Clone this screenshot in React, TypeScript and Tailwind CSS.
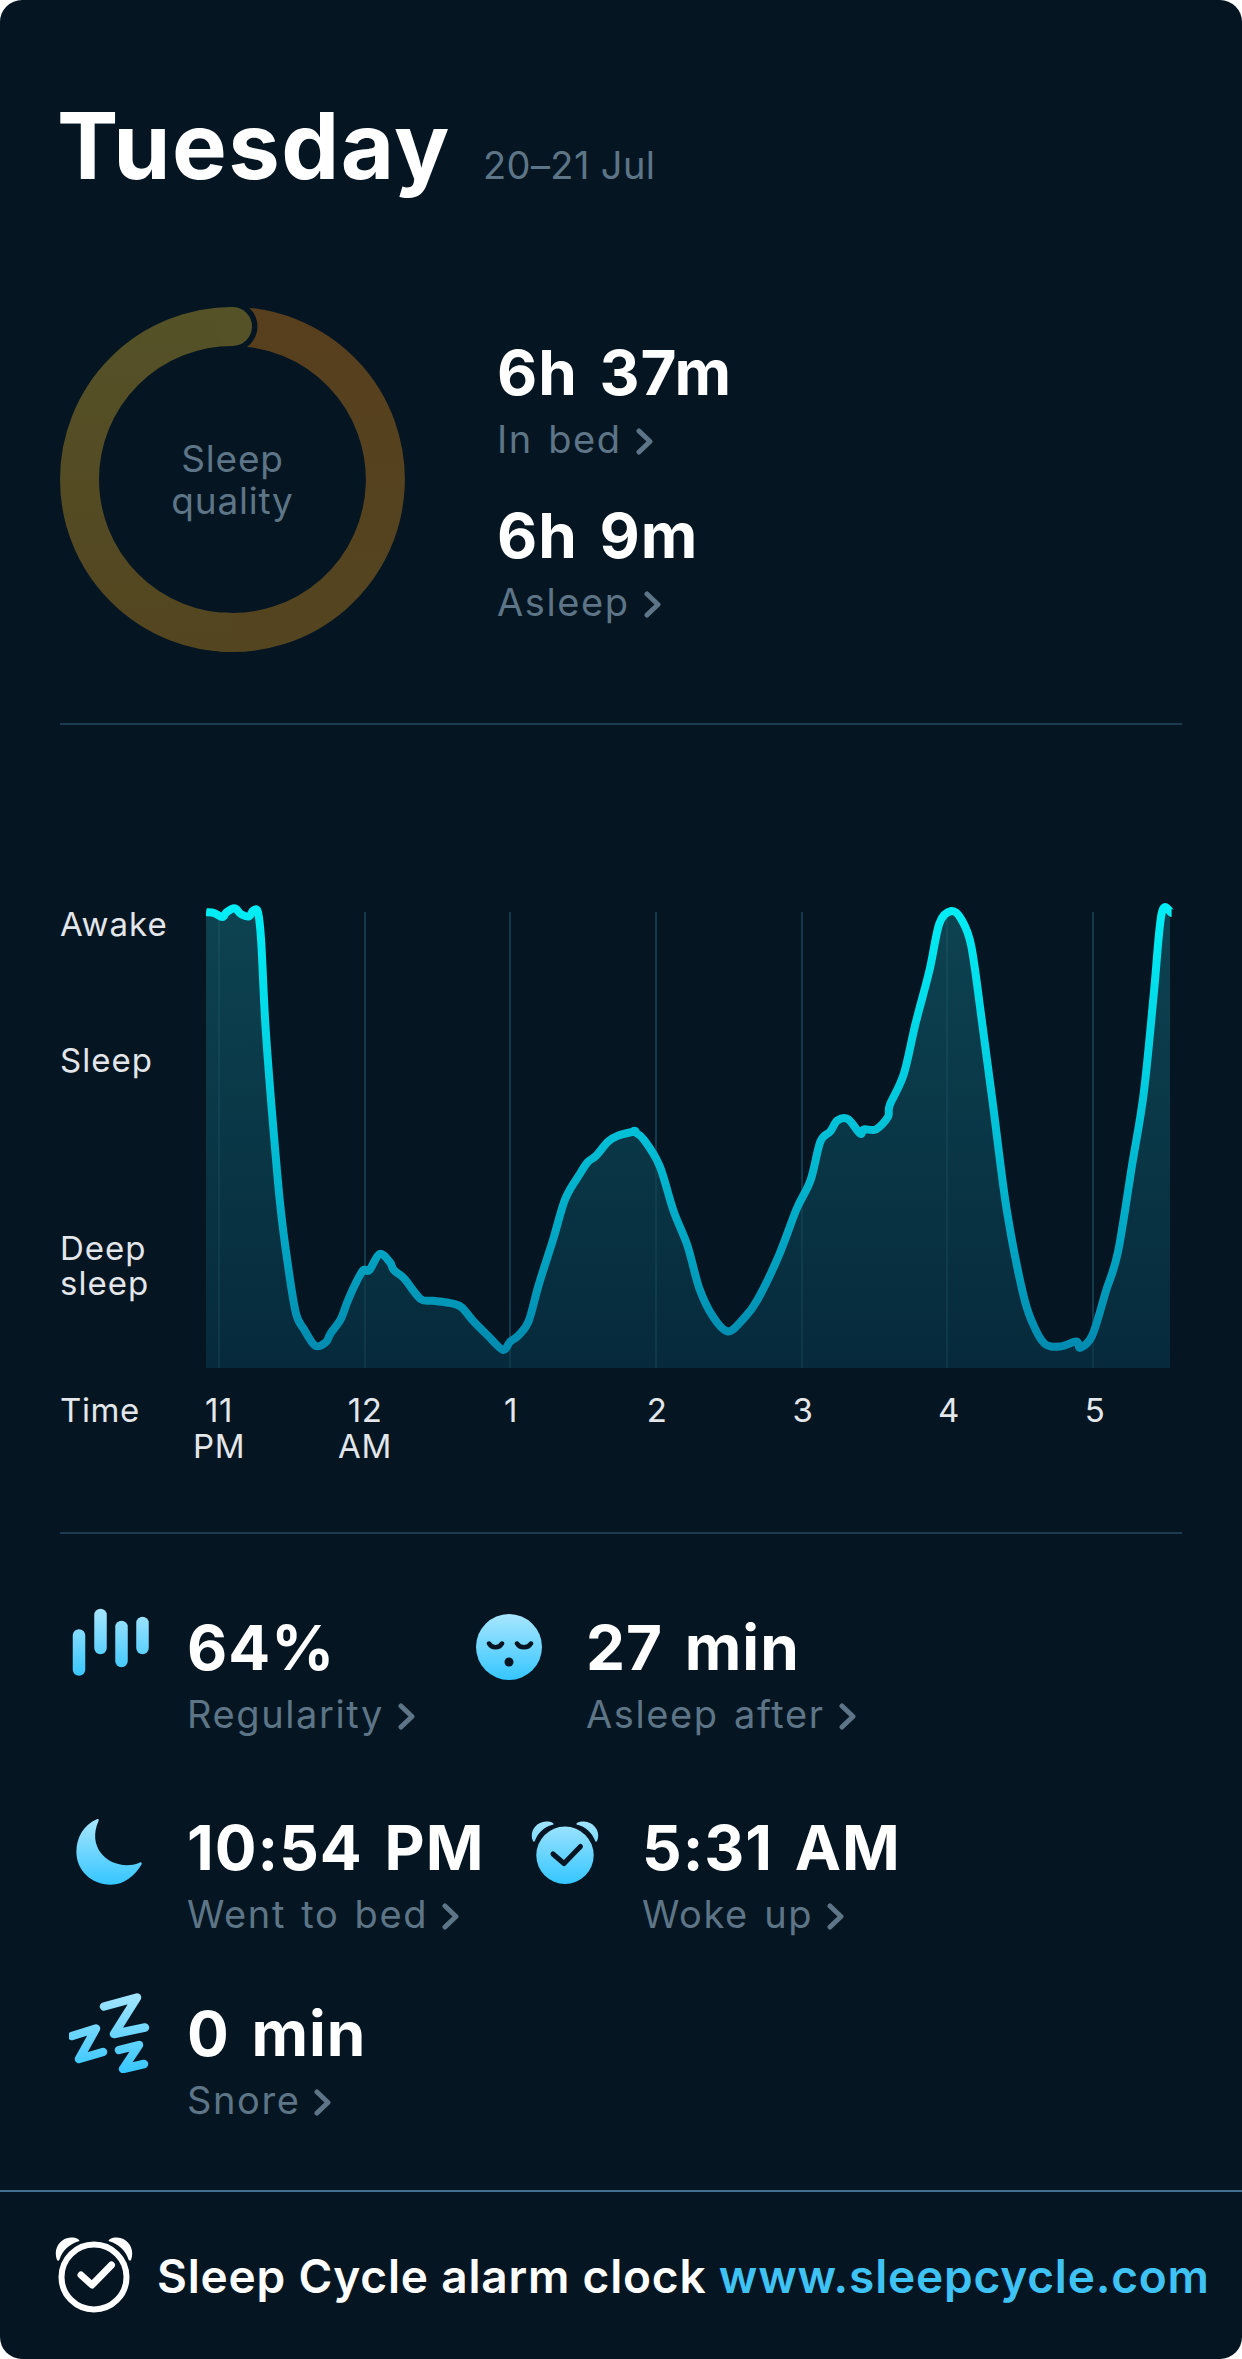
import React from 'react';

// Sleep curve traced from the graph, left part then right part
const leftCurve = [
  [505,128],[525,130],[545,140],[555,128],[575,118],[590,132],[610,138],[620,124],[632,128],[640,200],[650,400],[665,600],[685,830],[705,990],[725,1110],[745,1150],[772,1190],[798,1182],[810,1160],[835,1125],[850,1085],[870,1040],[890,1005],[905,1005],[930,965],[955,985],[965,1005],[990,1025],[1030,1075],[1060,1080],[1100,1085],[1130,1095],[1160,1130],[1195,1165],[1232,1200],[1250,1180],[1270,1165],[1295,1130],[1320,1040],[1355,930],[1385,830],[1420,770],[1440,740],[1460,725],[1490,690],[1515,675],[1555,665],
].map(([x, y]) => [x / 2.45, 860 + y / 2.45]);

const rightCurve = [
  [35,665],[60,685],[100,750],[135,860],[170,945],[200,1050],[235,1120],[272,1155],[310,1125],[345,1080],[400,970],[445,855],[480,785],[505,690],[530,665],[548,638],[575,635],[605,670],[615,660],[645,660],[675,630],[680,600],[715,525],[745,400],[780,270],[805,155],[835,125],[860,145],[885,210],[910,380],[940,600],[975,860],[1015,1060],[1040,1135],[1070,1185],[1110,1192],[1150,1180],[1160,1195],[1190,1165],[1225,1055],[1255,960],[1290,750],[1320,570],[1345,330],[1365,130],[1390,130],
].map(([x, y]) => [620 + x / 2.52, 860 + y / 2.45]);

// Catmull-Rom through the traced points so the line doesn't look like straight segments
const toPath = (pts: number[][]) => {
  let d = `M${pts[0][0].toFixed(1)} ${pts[0][1].toFixed(1)}`;
  for (let i = 0; i < pts.length - 1; i++) {
    const p0 = pts[Math.max(i - 1, 0)];
    const p1 = pts[i];
    const p2 = pts[i + 1];
    const p3 = pts[Math.min(i + 2, pts.length - 1)];
    const c1x = p1[0] + (p2[0] - p0[0]) / 6;
    const c1y = p1[1] + (p2[1] - p0[1]) / 6;
    const c2x = p2[0] - (p3[0] - p1[0]) / 6;
    const c2y = p2[1] - (p3[1] - p1[1]) / 6;
    d += `C${c1x.toFixed(1)} ${c1y.toFixed(1)} ${c2x.toFixed(1)} ${c2y.toFixed(1)} ${p2[0].toFixed(1)} ${p2[1].toFixed(1)}`;
  }
  return d;
};

const curve = toPath([...leftCurve, ...rightCurve]);
const area = `${curve}L1170 912L1170 1368L206 1368Z`;
const gridLines = [219, 365, 510, 656, 802, 947, 1093];

const ticks = [
  { top: '11', bottom: 'PM' },
  { top: '12', bottom: 'AM' },
  { top: '1' },
  { top: '2' },
  { top: '3' },
  { top: '4' },
  { top: '5' },
];

const Chevron = () => (
  <svg width="17" height="27" viewBox="0 0 17 27" fill="none" className="ml-[14px] mt-[4px]">
    <path d="M3 3l11 10.500L3 24" stroke="#5d7586" strokeWidth="5" strokeLinecap="round" strokeLinejoin="round" />
  </svg>
);

const Stat = ({ value, label, className }: { value: string; label: string; className?: string }) => (
  <div className={className}>
    <div className="h-[66px] text-[62px] leading-[66px] font-bold text-white tracking-[1px] [word-spacing:6px] whitespace-nowrap">{value}</div>
    <div className="h-[66px] flex items-center text-[38px] leading-[66px] text-[#5d7586] tracking-[1.6px] [word-spacing:3px] whitespace-nowrap">
      {label}
      <Chevron />
    </div>
  </div>
);

const IconGradient = ({ id }: { id: string }) => (
  <linearGradient id={id} x1="0" y1="0" x2="0" y2="1">
    <stop offset="0" stopColor="#a8e6ff" />
    <stop offset="1" stopColor="#35c6ff" />
  </linearGradient>
);

const BarsIcon = () => (
  <svg width="80" height="70" viewBox="0 0 80 70">
    <defs>
      <linearGradient id="bars" gradientUnits="userSpaceOnUse" x1="0" y1="0" x2="0" y2="70">
        <stop offset="0" stopColor="#a8e6ff" />
        <stop offset="1" stopColor="#35c6ff" />
      </linearGradient>
    </defs>
    <g stroke="url(#bars)" strokeWidth="12.5" strokeLinecap="round">
      <path d="M7 27.5V61.5" />
      <path d="M28.5 7V40" />
      <path d="M49.5 19V53" />
      <path d="M70.5 15V40" />
    </g>
  </svg>
);

const FaceIcon = () => (
  <svg width="66" height="66" viewBox="0 0 66 66">
    <defs>
      <IconGradient id="face" />
    </defs>
    <circle cx="33" cy="33" r="33" fill="url(#face)" />
    <path d="M13 29.5c3 5 10 5 13 0M41 29.5c3 5 11 5 14 0" fill="none" stroke="#051622" strokeWidth="4.5" strokeLinecap="round" />
    <circle cx="33" cy="48" r="4.5" fill="#051622" />
  </svg>
);

const MoonIcon = () => (
  <svg width="68" height="68" viewBox="0 0 68 68">
    <defs>
      <IconGradient id="moon" />
    </defs>
    <path
      d="M22.4 1C8 7 1.4 20 1.4 34 1.4 52 16 66.7 35.8 66.7 49 66.7 60 58 66.8 46 66.8 44 65 44 64 45 40 54 10 34 23.5 3 24 1 23.4.8 22.4 1Z"
      fill="url(#moon)"
    />
  </svg>
);

const AlarmIcon = () => (
  <svg width="70" height="66" viewBox="0 0 70 66">
    <defs>
      <linearGradient id="alarm" gradientUnits="userSpaceOnUse" x1="0" y1="0" x2="0" y2="66">
        <stop offset="0" stopColor="#a8e6ff" />
        <stop offset="1" stopColor="#35c6ff" />
      </linearGradient>
    </defs>
    <circle cx="35" cy="37.3" r="28.7" fill="url(#alarm)" />
    <path d="M3 23C-1 15 5 4 16 3.500 20 3.200 24 4.500 23.500 6.500 14 8.500 8 15 5 22.500 4.500 24 3.500 24 3 23Z" fill="url(#alarm)" />
    <path d="M67 23C71 15 65 4 54 3.500 50 3.200 46 4.500 46.500 6.500 56 8.500 62 15 65 22.500 65.500 24 66.500 24 67 23Z" fill="url(#alarm)" />
    <path d="M23 36l11 9.500 16.500-17" fill="none" stroke="#051622" strokeWidth="5" strokeLinecap="round" strokeLinejoin="round" />
  </svg>
);

const SnoreIcon = () => (
  <svg width="82" height="82" viewBox="0 0 82 82">
    <defs>
      <linearGradient id="zzz" gradientUnits="userSpaceOnUse" x1="0" y1="0" x2="0" y2="82">
        <stop offset="0" stopColor="#a8e6ff" />
        <stop offset="1" stopColor="#35c6ff" />
      </linearGradient>
    </defs>
    <g fill="none" stroke="url(#zzz)" strokeWidth="8.500" strokeLinecap="round" strokeLinejoin="round">
      <path d="M35 15.500L68 6.500 45 43 76 36.500" />
      <path d="M3 45L27 37.500 10 68 34 61" />
      <path d="M50 59L70 54 54 78 75 73" />
    </g>
  </svg>
);

const LogoIcon = () => (
  <svg width="80" height="78" viewBox="0 0 80 78" className="shrink-0">
    <circle cx="40" cy="41" r="32.500" fill="none" stroke="#fff" strokeWidth="6" />
    <path d="M27 39l11 10 19.500-20" fill="none" stroke="#fff" strokeWidth="7" strokeLinecap="round" strokeLinejoin="round" />
    <path d="M3 24C-1 14 5 2 17 1.500 21 1.300 25 2.500 25.500 5 15 8 8 15 5.500 23.500 5 25 3.500 25 3 24Z" fill="#fff" />
    <path d="M77 24C81 14 75 2 63 1.500 59 1.300 55 2.500 54.500 5 65 8 72 15 74.500 23.500 75 25 76.500 25 77 24Z" fill="#fff" />
  </svg>
);

const QualityRing = () => (
  <svg width="345" height="345" viewBox="0 0 345 345" className="shrink-0 overflow-visible">
    <defs>
      <linearGradient id="ringRight" gradientUnits="userSpaceOnUse" x1="0" y1="0" x2="0" y2="345">
        <stop offset="0" stopColor="#583f1e" />
        <stop offset="1" stopColor="#53451f" />
      </linearGradient>
      <linearGradient id="ringLeft" gradientUnits="userSpaceOnUse" x1="0" y1="0" x2="0" y2="345">
        <stop offset="0" stopColor="#555228" />
        <stop offset="1" stopColor="#53451f" />
      </linearGradient>
    </defs>
    <path d="M172.500 19.500A153 153 0 1 1 160 325" fill="none" stroke="url(#ringRight)" strokeWidth="39" />
    <circle cx="172.500" cy="19.500" r="25" fill="#051622" />
    <path d="M172.500 325.500A153 153 0 0 1 172.500 19.500" fill="none" stroke="url(#ringLeft)" strokeWidth="39" />
    <circle cx="172.500" cy="19.500" r="19.500" fill="#555228" />
  </svg>
);

const App: React.FC = () => {
  return (
    <div className="w-[1242px] h-[2359px] bg-white font-['Inter',sans-serif]">
      <div className="w-full h-full flex flex-col bg-[#051622] rounded-[22px] overflow-hidden">
        {/* Header */}
        <div className="h-[307px] pt-[96px] px-[60px] flex items-baseline shrink-0">
          <h1 className="-ml-[3px] text-[92px] leading-[100px] font-bold text-white tracking-[1.5px]">Tuesday</h1>
          <span className="ml-[32px] text-[38px] text-[#5d7586] tracking-[0.4px]">20–21 Jul</span>
        </div>

        {/* Sleep quality and totals */}
        <div className="h-[416px] px-[60px] flex items-start shrink-0">
          <div className="relative">
            <QualityRing />
            <div className="absolute inset-0 flex flex-col items-center justify-center text-[37px] leading-[42px] text-[#5d7586] tracking-[0.8px]">
              <span>Sleep</span>
              <span>quality</span>
            </div>
          </div>
          <div className="ml-[92px] mt-[33px]">
            <Stat value="6h 37m" label="In bed" />
            <Stat value="6h 9m" label="Asleep" className="mt-[31px]" />
          </div>
        </div>
        <div className="mx-[60px] h-[2px] bg-[#1c3a50] shrink-0" />

        {/* Graph */}
        <div className="pt-[175px] shrink-0">
          <div className="flex pl-[60px]">
            <div className="w-[146px] shrink-0 text-[33px] tracking-[1px] text-[#e3e6ea]">
              <div className="mt-[4px] h-[40px] leading-[40px]">Awake</div>
              <div className="mt-[96px] h-[40px] leading-[40px]">Sleep</div>
              <div className="mt-[151px] h-[35px] leading-[35px]">Deep</div>
              <div className="h-[35px] leading-[35px]">sleep</div>
            </div>
            <svg width="975" height="470" viewBox="206 900 975 470" className="shrink-0">
              <defs>
                <linearGradient id="areaFill" gradientUnits="userSpaceOnUse" x1="0" y1="905" x2="0" y2="1368">
                  <stop offset="0" stopColor="#0d4351" />
                  <stop offset="1" stopColor="#062a3b" />
                </linearGradient>
                <linearGradient id="lineStroke" gradientUnits="userSpaceOnUse" x1="0" y1="905" x2="0" y2="1368">
                  <stop offset="0" stopColor="#00eef6" />
                  <stop offset="0.35" stopColor="#00d0e2" />
                  <stop offset="1" stopColor="#0087ad" />
                </linearGradient>
              </defs>
              {gridLines.map((x) => (
                <line key={x} x1={x} x2={x} y1="912" y2="1368" stroke="#11384c" strokeWidth="1.500" />
              ))}
              <path d={area} fill="url(#areaFill)" />
              {gridLines.map((x) => (
                <line key={`over-${x}`} x1={x} x2={x} y1="912" y2="1368" stroke="#5ea5b8" strokeOpacity="0.14" strokeWidth="1.500" />
              ))}
              <path d={curve} fill="none" stroke="url(#lineStroke)" strokeWidth="8" strokeLinejoin="round" />
            </svg>
          </div>
          <div className="h-[162px] pt-[22px] pl-[60px] flex text-[33px] leading-[36px] tracking-[0.6px] text-[#e3e6ea]">
            <div className="w-[86px] shrink-0">Time</div>
            {ticks.map((tick) => (
              <div key={tick.top} className="w-[146px] shrink-0 flex flex-col items-center">
                <span>{tick.top}</span>
                {tick.bottom && <span>{tick.bottom}</span>}
              </div>
            ))}
          </div>
        </div>
        <div className="mx-[60px] h-[2px] bg-[#1c3a50] shrink-0" />

        {/* Details */}
        <div className="h-[656px] pt-[74px] shrink-0">
          <div className="flex items-start h-[140px]">
            <div className="ml-[72px] w-[115px] shrink-0"><BarsIcon /></div>
            <Stat value="64%" label="Regularity" className="w-[289px] mt-[7px] shrink-0" />
            <div className="w-[110px] shrink-0 mt-[6px]"><FaceIcon /></div>
            <Stat value="27 min" label="Asleep after" className="mt-[7px]" />
          </div>
          <div className="flex items-start h-[140px] mt-[60px]">
            <div className="ml-[75px] w-[112px] shrink-0 mt-[10px]"><MoonIcon /></div>
            <Stat value="10:54 PM" label="Went to bed" className="w-[343px] shrink-0 mt-[7px]" />
            <div className="w-[112px] shrink-0 mt-[10px]"><AlarmIcon /></div>
            <Stat value="5:31 AM" label="Woke up" className="mt-[7px]" />
          </div>
          <div className="flex items-start mt-[46px]">
            <div className="ml-[69px] w-[118px] shrink-0 -mt-[3px]"><SnoreIcon /></div>
            <Stat value="0 min" label="Snore" className="mt-[7px]" />
          </div>
        </div>

        {/* Footer */}
        <div className="flex-1 border-t-2 border-[#44708f] flex items-center pl-[54px] pb-[2px]">
          <LogoIcon />
          <div className="ml-[23px] mt-[3px] text-[46px] font-semibold text-white tracking-[0.8px] whitespace-nowrap">
            Sleep Cycle alarm clock <span className="text-[#3fc3f5]">www.sleepcycle.com</span>
          </div>
        </div>
      </div>
    </div>
  );
};

export default App;
